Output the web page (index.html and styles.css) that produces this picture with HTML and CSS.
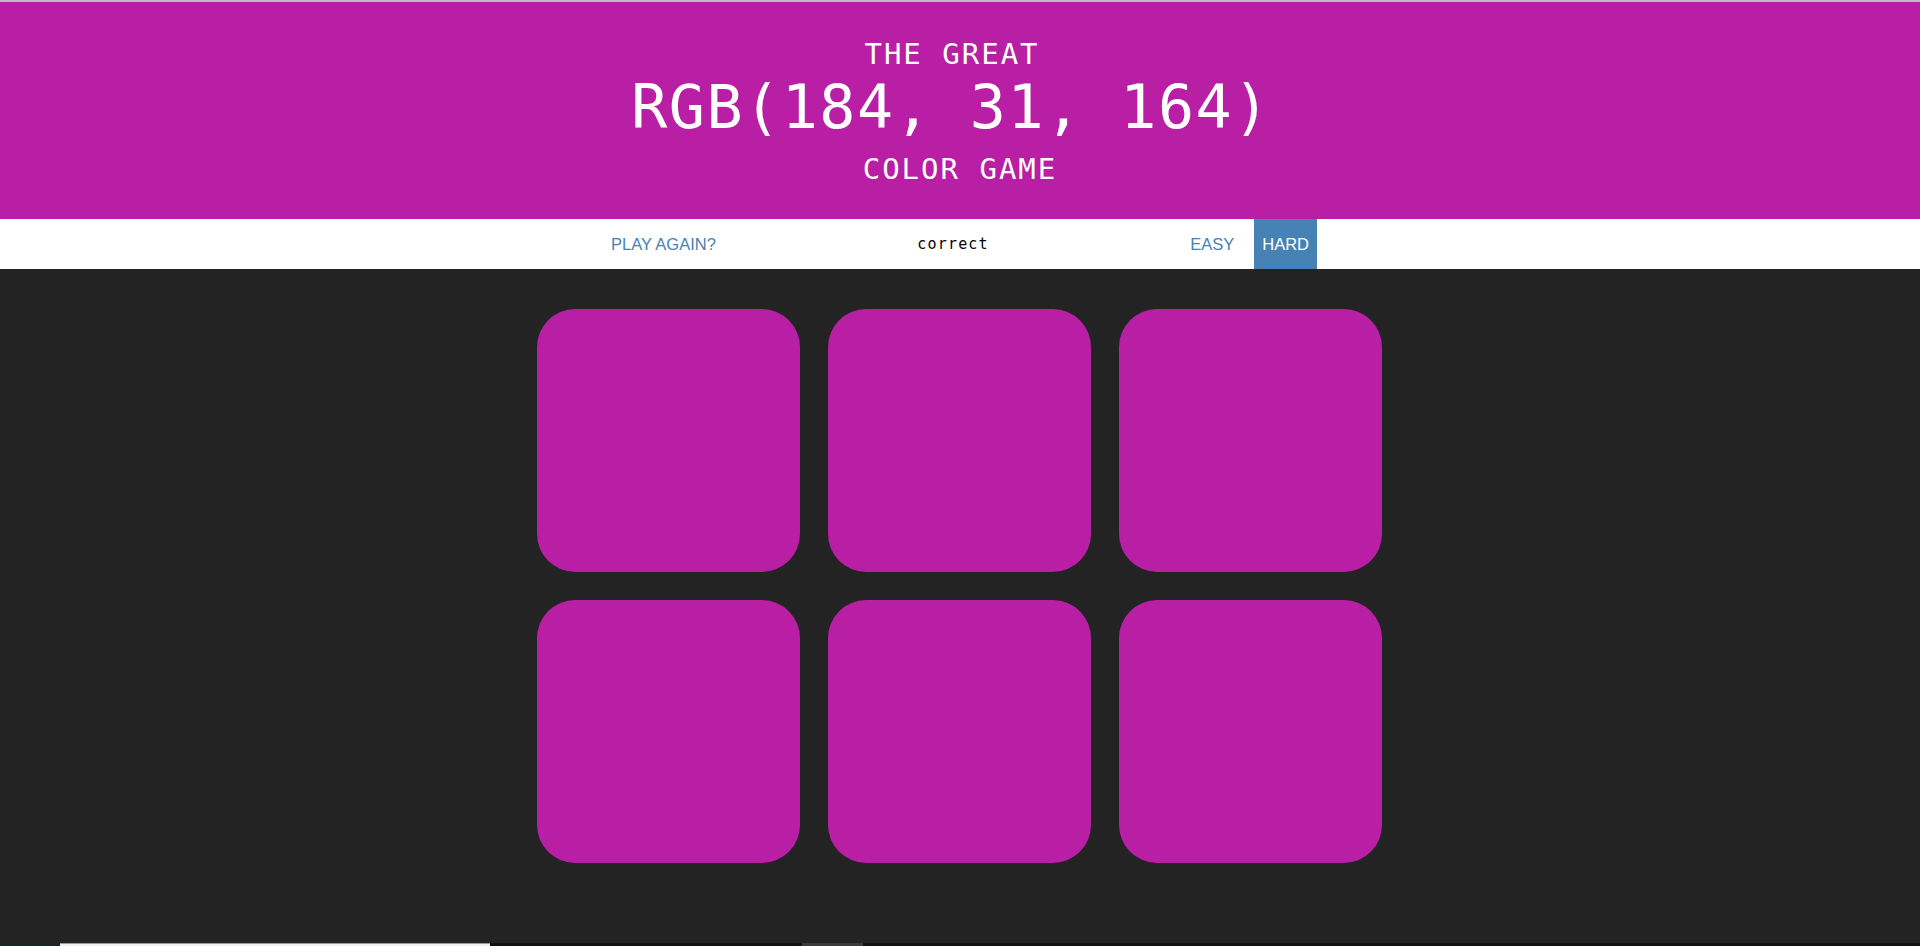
FILE: index.html
```html
<!DOCTYPE html>
<html lang="en">
<head>
<meta charset="utf-8">
<title>Color Game</title>
<link rel="stylesheet" href="styles.css">
</head>
<body>
  <header class="header">
    <div class="title-small title-top">THE GREAT</div>
    <div class="title-big">RGB(184, 31, 164)</div>
    <div class="title-small title-bottom">COLOR GAME</div>
  </header>
  <nav class="stripe">
    <div class="stripe-inner">
      <button class="btn">PLAY AGAIN?</button>
      <span class="message">correct</span>
      <div class="modes">
        <button class="btn">EASY</button>
        <button class="btn btn-selected">HARD</button>
      </div>
    </div>
  </nav>
  <main class="board">
    <div class="square"></div>
    <div class="square"></div>
    <div class="square"></div>
    <div class="square"></div>
    <div class="square"></div>
    <div class="square"></div>
  </main>
  <div class="taskbar">
    <span class="tb-start"></span>
    <span class="tb-search"></span>
    <span class="tb-gap"></span>
    <span class="tb-app"></span>
  </div>
</body>
</html>
```

FILE: styles.css
```css
html, body {
  margin: 0;
  padding: 0;
}

body {
  background: #232323;
  height: 946px;
  overflow: hidden;
}

.header {
  background: #b81fa4;
  border-top: 2px solid #bdbdbd;
  padding: 35px 0 33px;
  text-align: center;
  color: #ffffff;
  font-family: "DejaVu Sans Mono", "Liberation Mono", monospace;
}

.title-small {
  font-size: 29px;
  line-height: 34px;
  letter-spacing: 2px;
}

.title-top {
  padding-right: 16px;
}

.title-big {
  margin-top: 1px;
  padding-right: 18px;
  font-size: 60px;
  line-height: 70px;
  letter-spacing: 1.5px;
}

.title-bottom {
  margin-top: 10px;
}

.stripe {
  background: #ffffff;
  height: 50px;
}

.stripe-inner {
  width: 714px;
  height: 100%;
  margin: 0 auto;
  display: flex;
  justify-content: space-between;
  align-items: stretch;
}

.btn {
  border: none;
  background: none;
  margin: 0;
  padding: 0 8px;
  font-family: "Liberation Sans", Arial, sans-serif;
  font-size: 16.5px;
  color: #4682b4;
  height: 100%;
  cursor: pointer;
}

.btn-selected {
  background: #4682b4;
  color: #ffffff;
}

.message {
  align-self: center;
  font-family: "DejaVu Sans Mono", "Liberation Mono", monospace;
  font-size: 15px;
  letter-spacing: 1.2px;
  color: #000000;
}

.modes {
  display: flex;
  gap: 12px;
}

.board {
  width: 846px;
  margin: 40px auto 0;
  display: grid;
  grid-template-columns: repeat(3, 263px);
  gap: 28px;
}

.square {
  height: 263px;
  background: #b81fa4;
  border-radius: 38px;
}

.taskbar {
  position: fixed;
  left: 0;
  right: 0;
  bottom: 0;
  height: 3px;
  display: flex;
  background: #0e1215;
}

.tb-start {
  width: 60px;
  background: #17252c;
}

.tb-search {
  width: 430px;
  background: #f0f0f0;
  border-top: 1px solid #9a9a9a;
}

.tb-gap {
  width: 312px;
}

.tb-app {
  width: 61px;
  background: #3a3a3a;
}
```
